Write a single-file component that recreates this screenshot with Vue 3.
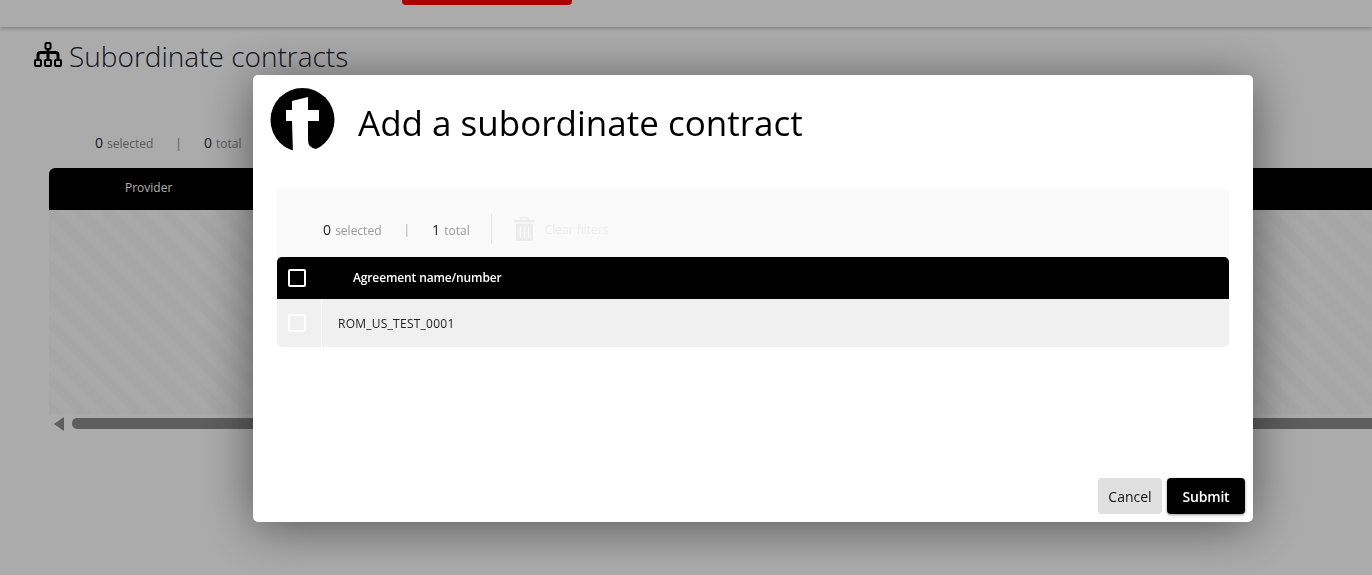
<template>
  <div class="page">
    <header class="topbar">
      <div class="red-btn"></div>
    </header>

    <h1 class="page-title">
      <svg class="tree-icon" viewBox="0 0 28 25" width="28" height="25" fill="none" stroke="#000" stroke-width="2">
        <rect x="11.500" y="1" width="5" height="6" rx="1" />
        <path d="M14 7v11M4 18v-5q0-2.500 2.500-2.500h15q2.500 0 2.500 2.500v5" stroke-width="3" />
        <rect x="1" y="18" width="6" height="6" rx="1" />
        <rect x="11" y="18" width="6" height="6" rx="1" />
        <rect x="21" y="18" width="6" height="6" rx="1" />
      </svg>
      <span>Subordinate contracts</span>
    </h1>

    <div class="page-stats">
      <span class="num">0</span> <span class="lbl">selected</span>
      <span class="pipe">|</span>
      <span class="num">0</span> <span class="lbl">total</span>
    </div>

    <div class="bg-table">
      <div class="bg-head"><span>Provider</span></div>
      <div class="bg-body"></div>
      <div class="bg-scroll">
        <span class="arrow"></span>
        <span class="thumb"></span>
      </div>
    </div>
  </div>

  <div class="overlay">
    <section class="modal">
      <div class="modal-head">
        <svg class="logo" viewBox="0 0 65 65" width="65" height="65">
          <circle cx="32.500" cy="32" r="32" fill="#000" />
          <path d="M22 13 L38 9 V22 H49 V33 H38 V52 Q38 60 46 61 L46 66 H23 L22 33 H16 V22 H22 Z" fill="#fff" />
        </svg>
        <h2>Add a subordinate contract</h2>
      </div>

      <div class="grid-wrap">
        <div class="toolbar">
          <div class="stat first"><span class="num">0</span> <span class="lbl">selected</span></div>
          <span class="pipe">|</span>
          <div class="stat"><span class="num">1</span> <span class="lbl">total</span></div>
          <span class="divider"></span>
          <svg class="trash" viewBox="0 0 22 25" width="21" height="24" fill="#ededed">
            <path d="M8 0h6q1.500 0 1.500 1.500V3H21q1 0 1 1v1.500H0V4q0-1 1-1h5.500V1.500Q6.500 0 8 0zM8 1.500V3h6V1.500z" />
            <path fill-rule="evenodd" d="M2 7h18v16q0 2-2 2H4q-2 0-2-2zM6 10v12h1.500V10zM10.200 10v12h1.600V10zM14.500 10v12H16V10z" />
          </svg>
          <span class="clear">Clear filters</span>
        </div>

        <div class="grid-head">
          <span class="check-cell"><span class="check dark"></span></span>
          <span class="head-label">Agreement name/number</span>
        </div>
        <div class="grid-row" v-for="row in rows" :key="row">
          <span class="check-cell sep"><span class="check"></span></span>
          <span class="row-label">{{ row }}</span>
        </div>
      </div>

      <div class="modal-foot">
        <button class="btn cancel">Cancel</button>
        <button class="btn submit">Submit</button>
      </div>
    </section>
  </div>
</template>

<script setup>
const rows = ['ROM_US_TEST_0001']
</script>

<style>
html, body {
  margin: 0;
  height: 100%;
  overflow: hidden;
  background: #fff;
}
</style>

<style scoped>
* {
  box-sizing: border-box;
}

.page {
  height: 575px;
  overflow: hidden;
  background: #fff;
  font-family: "Open Sans", sans-serif;
}

.topbar {
  height: 27px;
  padding-left: 402px;
  background: #fff;
  box-shadow: 0 1px 4px rgba(0, 0, 0, 0.3);
}

.red-btn {
  width: 170px;
  height: 5px;
  background: #ff0000;
  border-radius: 0 0 4px 4px;
}

.page-title {
  display: flex;
  align-items: center;
  gap: 7px;
  margin: 0;
  padding: 11px 0 0 34px;
  font-size: 28px;
  line-height: 36px;
  font-weight: 300;
  color: #1a2233;
}

.tree-icon {
  margin-bottom: 3px;
}

.page-stats {
  display: flex;
  align-items: baseline;
  margin: 58px 0 0 95px;
  height: 22px;
  font-size: 12px;
  line-height: 22px;
  color: #888;
}

.page-stats .num {
  font-size: 14px;
  color: #1a2233;
  margin-right: 4px;
}

.page-stats .pipe {
  margin: 0 22px;
}

.bg-table {
  margin: 14px 0 0 49px;
}

.bg-head {
  height: 42px;
  padding-left: 76px;
  background: #000;
  border-radius: 6px 0 0 0;
  font-size: 12px;
  line-height: 40px;
  color: #fff;
}

.bg-body {
  height: 204px;
  background: repeating-linear-gradient(45deg, #f8f8f8, #f8f8f8 10px, #fcfcfc 10px, #fcfcfc 20px);
}

.bg-scroll {
  display: flex;
  align-items: center;
  gap: 8px;
  height: 11px;
  margin-top: 4px;
  padding-left: 5px;
}

.arrow {
  width: 0;
  height: 0;
  border-style: solid;
  border-width: 7px 10px 7px 0;
  border-color: transparent #8c8c8c transparent transparent;
}

.thumb {
  flex: 1;
  height: 11px;
  background: #8c8c8c;
  border-radius: 5px 0 0 5px;
}

.overlay {
  position: fixed;
  inset: 0;
  padding: 75px 0 0 253px;
  background: rgba(0, 0, 0, 0.33);
  font-family: "Open Sans", sans-serif;
}

.modal {
  display: flex;
  flex-direction: column;
  width: 1000px;
  height: 447px;
  background: #fff;
  border-radius: 5px;
  box-shadow: 0 5px 50px rgba(0, 0, 0, 0.5);
}

.modal-head {
  display: flex;
  align-items: center;
  gap: 23px;
  height: 114px;
  padding: 0 0 20px 17px;
}

.logo {
  margin-bottom: 4px;
}

.modal-head h2 {
  margin: 0;
  font-size: 35px;
  font-weight: 400;
  color: #000;
}

.grid-wrap {
  margin: 0 24px;
}

.toolbar {
  display: flex;
  align-items: center;
  height: 68px;
  padding: 12px 0 0 46px;
  background: #fafafa;
  color: #999;
  font-size: 12px;
}

.stat .num {
  font-size: 14px;
  color: #222;
  margin-right: 1px;
}

.stat .lbl {
  color: #999;
}

.toolbar .pipe {
  margin: 0 22px;
  color: #aaa;
}

.divider {
  width: 1px;
  height: 30px;
  margin: 0 22px 0 21px;
  background: #e2e2e2;
}

.trash {
  margin-right: 10px;
}

.clear {
  color: #ededed;
}

.grid-head {
  display: flex;
  align-items: center;
  height: 42px;
  padding-bottom: 2px;
  background: #000;
  border-radius: 5px 5px 0 0;
}

.check-cell {
  display: flex;
  align-items: center;
  justify-content: center;
  width: 45px;
  height: 100%;
  padding-right: 5px;
  flex: none;
}

.grid-head .check-cell {
  margin-bottom: -2px;
}

.check-cell.sep {
  border-right: 1px solid #fff;
}

.check {
  width: 18px;
  height: 18px;
  border: 2px solid #fff;
  border-radius: 2px;
}

.head-label {
  margin-left: 31px;
  font-size: 12px;
  font-weight: 600;
  letter-spacing: -0.13px;
  color: #fff;
}

.grid-row {
  display: flex;
  align-items: center;
  height: 48px;
  background: #f0f0f0;
  border-radius: 0 0 5px 5px;
}

.row-label {
  margin-left: 16px;
  font-size: 12px;
  letter-spacing: 0.25px;
  color: #222;
}

.modal-foot {
  display: flex;
  justify-content: flex-end;
  gap: 5px;
  margin-top: auto;
  padding: 0 8px 8px 0;
}

.btn {
  height: 36px;
  border: none;
  border-radius: 4px;
  font-family: inherit;
  font-size: 14px;
}

.cancel {
  width: 64px;
  background: #e0e0e0;
  color: #111;
}

.submit {
  width: 78px;
  background: #000;
  color: #fff;
  font-weight: 600;
  letter-spacing: -0.2px;
  box-shadow: 0 1px 3px rgba(0, 0, 0, 0.4);
}
</style>
